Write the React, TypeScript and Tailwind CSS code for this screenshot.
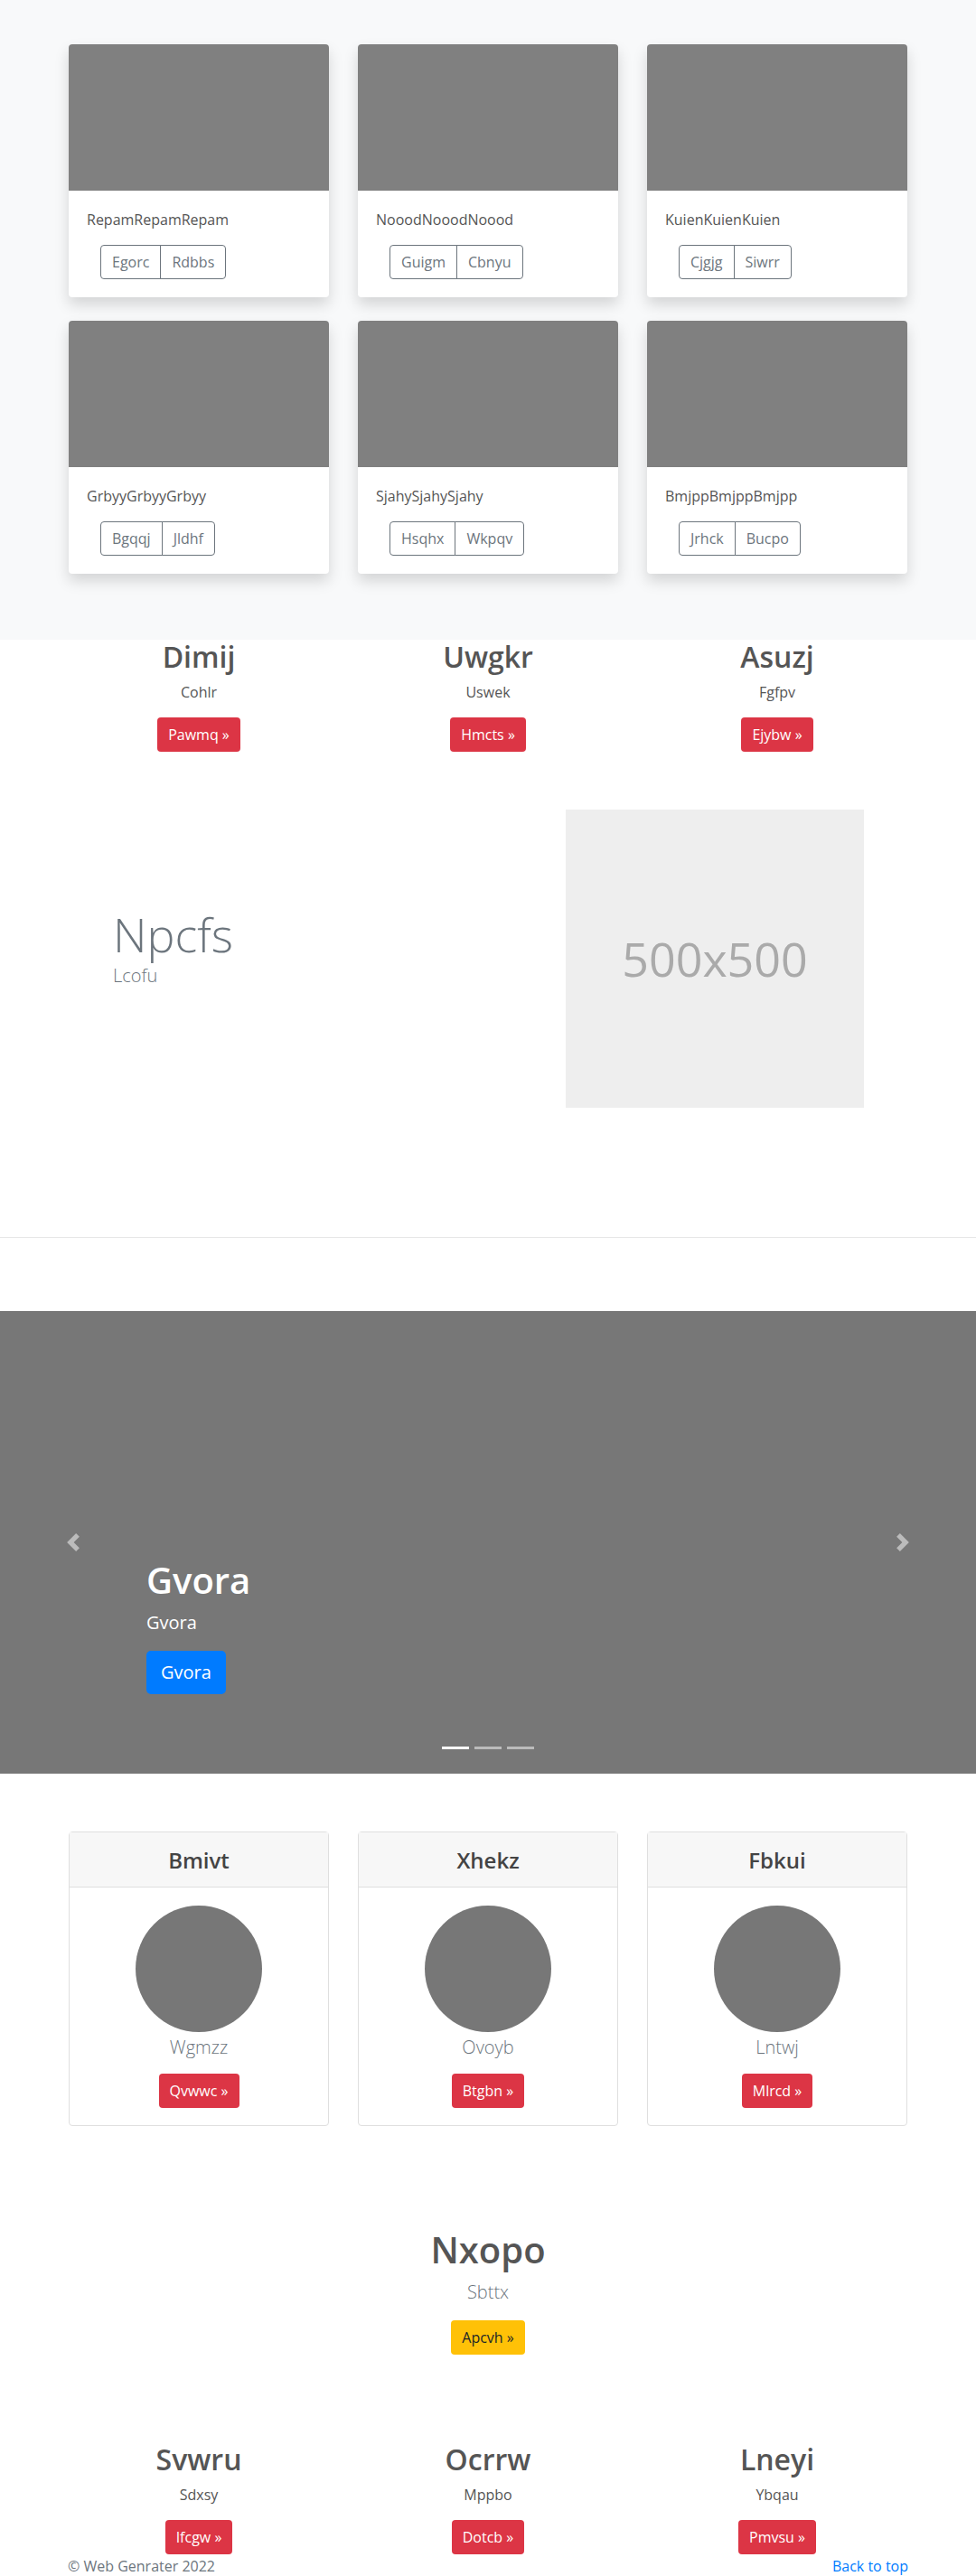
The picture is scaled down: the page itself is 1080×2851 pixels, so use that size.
import React from "react";

const topCards = [
  { title: "RepamRepamRepam", a: "Egorc", b: "Rdbbs" },
  { title: "NooodNooodNoood", a: "Guigm", b: "Cbnyu" },
  { title: "KuienKuienKuien", a: "Cjgjg", b: "Siwrr" },
  { title: "GrbyyGrbyyGrbyy", a: "Bgqqj", b: "Jldhf" },
  { title: "SjahySjahySjahy", a: "Hsqhx", b: "Wkpqv" },
  { title: "BmjppBmjppBmjpp", a: "Jrhck", b: "Bucpo" },
];

const cols1 = [
  { h: "Dimij", p: "Cohlr", b: "Pawmq" },
  { h: "Uwgkr", p: "Uswek", b: "Hmcts" },
  { h: "Asuzj", p: "Fgfpv", b: "Ejybw" },
];

const avatars = [
  { h: "Bmivt", p: "Wgmzz", b: "Qvwwc" },
  { h: "Xhekz", p: "Ovoyb", b: "Btgbn" },
  { h: "Fbkui", p: "Lntwj", b: "Mlrcd" },
];

const cols2 = [
  { h: "Svwru", p: "Sdxsy", b: "Ifcgw" },
  { h: "Ocrrw", p: "Mppbo", b: "Dotcb" },
  { h: "Lneyi", p: "Ybqau", b: "Pmvsu" },
];

function RedBtn({ label }: { label: string }) {
  return (
    <span className="inline-flex h-[38px] items-center rounded-[4px] bg-[#dc3545] px-3 text-[16px] leading-6 text-white">
      {label} »
    </span>
  );
}

function TopCard({ title, a, b }: { title: string; a: string; b: string }) {
  return (
    <div className="flex h-[280px] w-[288px] flex-col overflow-hidden rounded-[4px] bg-white shadow-[0_8px_16px_rgba(0,0,0,0.15)]">
      <div className="h-[162px] bg-[#808080]" />
      <div className="px-5 pt-5 pb-5">
        <p className="mb-4 text-[16px] leading-6 text-[#555]">{title}</p>
        <div className="ml-[15px] flex">
          <span className="inline-flex h-[38px] items-center rounded-l-[4px] border border-[#6c757d] px-3 text-[16px] text-[#6c757d]">
            {a}
          </span>
          <span className="-ml-px inline-flex h-[38px] items-center rounded-r-[4px] border border-[#6c757d] px-3 text-[16px] text-[#6c757d]">
            {b}
          </span>
        </div>
      </div>
    </div>
  );
}

function ThreeCols({ items }: { items: { h: string; p: string; b: string }[] }) {
  return (
    <div className="mx-auto grid w-[960px] grid-cols-3">
      {items.map((c) => (
        <div key={c.h} className="flex flex-col items-center">
          <h2 className="mb-2 text-[32px] leading-[38px] font-semibold text-[#555]">{c.h}</h2>
          <p className="mb-4 text-[16px] leading-6 text-[#555]">{c.p}</p>
          <RedBtn label={c.b} />
        </div>
      ))}
    </div>
  );
}

export default function App() {
  return (
    <div className="min-h-[2851px] bg-white font-['Open_Sans',sans-serif] text-[#555]">
      {/* Album section */}
      <section className="bg-[#f8f9fa] pt-[49px] pb-[73px]">
        <div className="mx-auto grid w-[928px] grid-cols-3 gap-x-8 gap-y-[26px]">
          {topCards.map((c) => (
            <TopCard key={c.title} {...c} />
          ))}
        </div>
      </section>

      {/* Three columns */}
      <section>
        <ThreeCols items={cols1} />
      </section>

      {/* Featurette */}
      <section className="mt-16 flex justify-between pl-[125px] pr-[124px]">
        <div className="mt-[107px]">
          <h2 className="text-[52px] leading-[62px] font-light text-[#6c757d]">Npcfs</h2>
          <p className="text-[20px] leading-[30px] font-light text-[#6c757d]">Lcofu</p>
        </div>
        <div className="flex h-[330px] w-[330px] items-center justify-center bg-[#eeeeee]">
          <span className="text-[52px] text-[#aaaaaa]">500x500</span>
        </div>
      </section>

      <hr className="mt-[143px] border-0 border-t border-[#e6e6e6]" />

      {/* Carousel */}
      <section className="relative mt-[81px] flex h-[512px] flex-col justify-end bg-[#777777] pb-[88px] pl-[162px]">
        <h1 className="mb-2 text-[40px] leading-[48px] font-semibold text-white">Gvora</h1>
        <p className="mb-4 text-[20px] leading-[30px] text-white">Gvora</p>
        <div>
          <span className="inline-flex h-[48px] items-center rounded-[5px] bg-[#007bff] px-4 text-[20px] text-white">
            Gvora
          </span>
        </div>
        <div className="absolute top-1/2 left-[71px] -translate-y-1/2 opacity-50">
          <svg width="20" height="20" viewBox="0 0 8 8" fill="#fff">
            <path d="M5.25 0l-4 4 4 4 1.5-1.5L4.25 4l2.5-2.5L5.25 0z" />
          </svg>
        </div>
        <div className="absolute top-1/2 right-[71px] -translate-y-1/2 opacity-50">
          <svg width="20" height="20" viewBox="0 0 8 8" fill="#fff">
            <path d="M2.75 0l-1.5 1.5L3.75 4l-2.5 2.5L2.75 8l4-4-4-4z" />
          </svg>
        </div>
        <div className="absolute bottom-[27px] left-0 flex w-full justify-center">
          <span className="mx-[3px] h-[3px] w-[30px] bg-white" />
          <span className="mx-[3px] h-[3px] w-[30px] bg-white/50" />
          <span className="mx-[3px] h-[3px] w-[30px] bg-white/50" />
        </div>
      </section>

      {/* Avatar cards */}
      <section className="mt-16">
        <div className="mx-auto grid w-[928px] grid-cols-3 gap-x-8">
          {avatars.map((c) => (
            <div key={c.h} className="flex w-[288px] flex-col rounded-[4px] border border-[#dfdfdf] bg-white">
              <div className="flex h-[61px] items-center justify-center border-b border-[#dfdfdf] bg-[#f7f7f7]">
                <h4 className="text-[24px] leading-[29px] font-semibold text-[#444]">{c.h}</h4>
              </div>
              <div className="flex flex-col items-center pt-5 pb-[19px]">
                <div className="h-[140px] w-[140px] rounded-full bg-[#777777]" />
                <p className="mt-[2px] mb-[14px] text-[20px] leading-[30px] font-light text-[#6c757d]">{c.p}</p>
                <RedBtn label={c.b} />
              </div>
            </div>
          ))}
        </div>
      </section>

      {/* Centered block */}
      <section className="mt-[113px] flex flex-col items-center">
        <h1 className="mb-2 text-[40px] leading-[48px] font-semibold text-[#555]">Nxopo</h1>
        <p className="mb-4 text-[20px] leading-[30px] font-light text-[#6c757d]">Sbttx</p>
        <span className="inline-flex h-[38px] items-center rounded-[4px] bg-[#ffc107] px-3 text-[16px] text-[#212529]">
          Apcvh »
        </span>
      </section>

      {/* Three columns 2 */}
      <section className="mt-[97px]">
        <ThreeCols items={cols2} />
      </section>

      <footer className="mx-auto mt-px flex w-[930px] justify-between text-[16px] leading-6">
        <span className="text-[#6c757d]">© Web Genrater 2022</span>
        <span className="text-[#007bff]">Back to top</span>
      </footer>
    </div>
  );
}
